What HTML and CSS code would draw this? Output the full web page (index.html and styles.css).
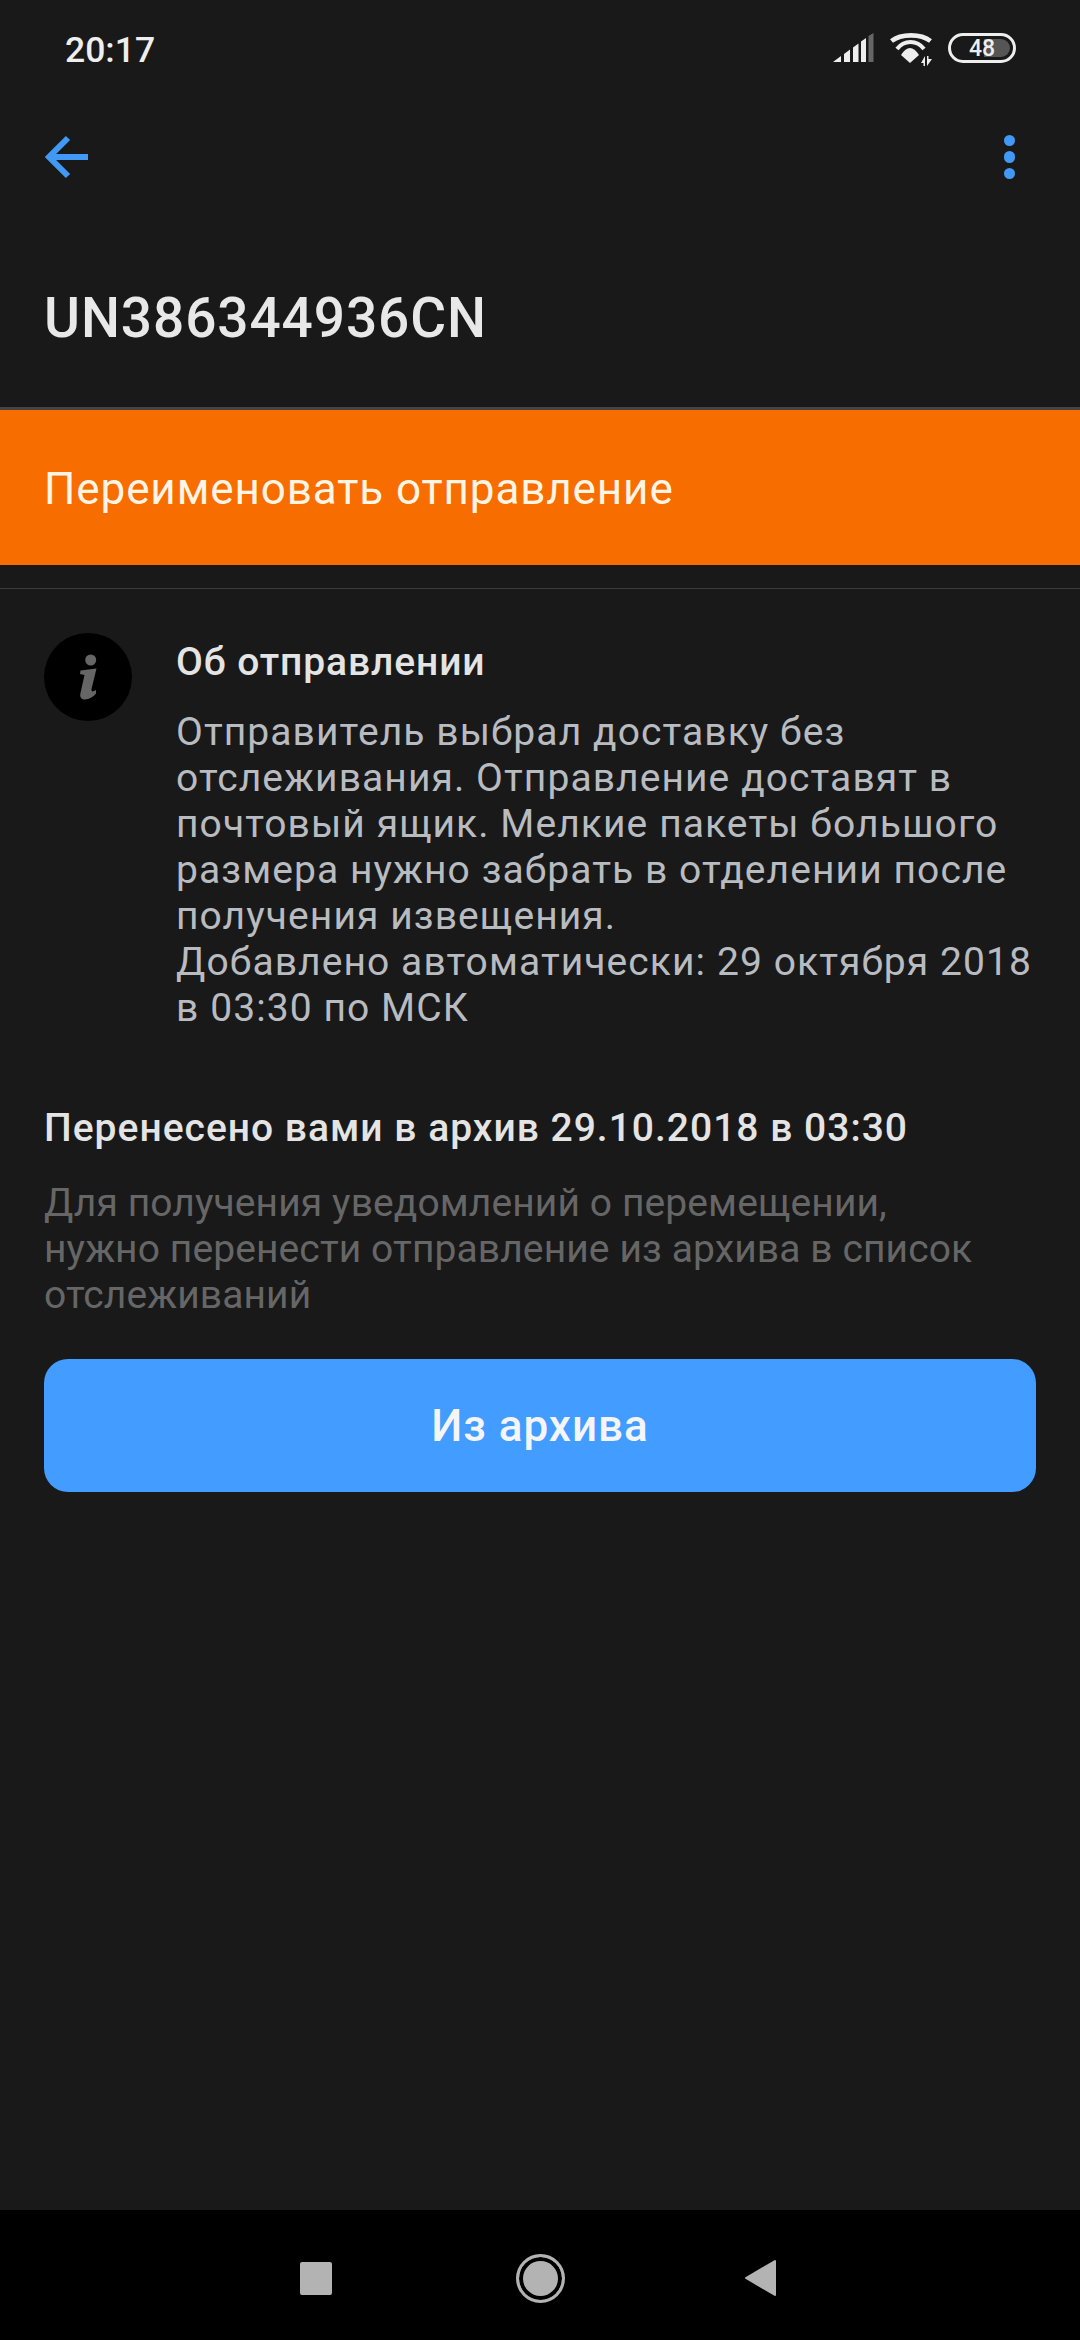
FILE: index.html
```html
<!DOCTYPE html>
<html lang="ru">
<head>
<meta charset="utf-8">
<title>UN386344936CN</title>
<link rel="stylesheet" href="styles.css">
</head>
<body>
<div class="screen">
  <div class="status">
    <span class="time">20:17</span>
    <div class="status-icons">
      <svg class="sig" width="41" height="29" viewBox="0 0 41 29">
        <path fill="#eee" d="M0 29 L8 23 V29 Z M11 21 L17 16.500 V29 H11 Z M20 14.500 L25.500 10.500 V29 H20 Z M28 8.500 L33 5 V29 H28 Z"/>
        <path fill="#666" d="M35.500 3 L40.500 0 V29 H35.500 Z"/>
      </svg>
      <svg class="wifi" width="44" height="34" viewBox="0 0 44 34">
        <g fill="none" stroke="#eee">
          <path stroke-width="4.700" d="M2.500 8 C12 0.500 32 0.500 41.500 8"/>
          <path stroke-width="4" d="M8 16 C15 6.700 28 6.700 35 16"/>
        </g>
        <path fill="#eee" d="M12 22 Q21 8 30 22 L21 30 Z"/>
        <path fill="#eee" d="M36 23 V33 H34.500 V30 H32 Z M38 23 H39.500 V26 H43 L38 33 Z"/>
      </svg>
      <div class="battery">
        <div class="battery-fill"></div>
        <span class="battery-num">48</span>
      </div>
    </div>
  </div>

  <div class="toolbar">
    <svg class="back" width="44" height="44" viewBox="0 0 44 44">
      <path fill="none" stroke="#4299f5" stroke-width="6" d="M44 22 H5 M24 3 L5 22 L24 41"/>
    </svg>
    <div class="dots"><i></i><i></i><i></i></div>
  </div>

  <h1 class="title">UN386344936CN</h1>

  <div class="rename">Переименовать отправление</div>
  <div class="divider"></div>

  <div class="about">
    <div class="info-icon">
      <svg width="32" height="46" viewBox="0 0 32 46">
        <circle cx="18.700" cy="6" r="5.500" fill="#666"/>
        <path fill="#666" d="M8.500 16.500 L24.500 14.500 L19.500 35 C19 38 21 38 24 36 L24 39.500 C21 43 17 45.500 13 45.500 C9 45.500 7.500 43 8.500 39 L12.500 21 L8 20 Z"/>
      </svg>
    </div>
    <div class="about-text">
      <div class="about-title">Об отправлении</div>
      <p class="about-body">Отправитель выбрал доставку без<br>отслеживания. Отправление доставят в<br>почтовый ящик. Мелкие пакеты большого<br>размера нужно забрать в отделении после<br>получения извещения.<br>Добавлено автоматически: 29 октября 2018<br>в 03:30 по МСК</p>
    </div>
  </div>

  <div class="archived">Перенесено вами в архив 29.10.2018 в 03:30</div>
  <p class="hint">Для получения уведомлений о перемещении,<br>нужно перенести отправление из архива в список<br>отслеживаний</p>
  <div class="button">Из архива</div>

  <div class="spacer"></div>

  <div class="nav">
    <div class="nav-square"></div>
    <div class="nav-home"></div>
    <svg class="nav-back" width="32" height="38" viewBox="0 0 32 38">
      <path fill="#b3b3b3" stroke="#b3b3b3" stroke-width="2" stroke-linejoin="round" d="M30 2 V36 L1 19 Z"/>
    </svg>
  </div>
</div>
</body>
</html>
```
FILE: styles.css
```css
* { box-sizing: border-box; }
html, body { margin: 0; padding: 0; }
body {
  width: 1080px;
  height: 2340px;
  background: #191919;
  font-family: Roboto, "Liberation Sans", sans-serif;
  overflow: hidden;
}
.screen {
  display: flex;
  flex-direction: column;
  width: 1080px;
  height: 2340px;
}
.status {
  display: flex;
  justify-content: space-between;
  align-items: center;
  height: 100px;
  padding: 0 64px 0 65px;
  flex: none;
}
.time {
  font-size: 35.500px;
  font-weight: 500;
  color: #eeeeee;
}
.status-icons {
  display: flex;
  align-items: flex-start;
  gap: 15px;
}
.battery {
  position: relative;
  width: 68px;
  height: 30px;
  border: 3px solid #eee;
  border-radius: 15px;
  display: flex;
  align-items: center;
  justify-content: center;
  overflow: hidden;
}
.battery-fill {
  position: absolute;
  top: 3px;
  bottom: 3px;
  right: 3px;
  width: 26px;
  background: #555;
  border-radius: 0 10px 10px 0;
}
.battery-num {
  position: relative;
  font-size: 23px;
  font-weight: 500;
  color: #eee;
}
.toolbar {
  display: flex;
  justify-content: space-between;
  align-items: center;
  height: 114px;
  padding: 0 65px 0 44px;
  flex: none;
}
.dots {
  display: flex;
  flex-direction: column;
  gap: 5px;
}
.dots i {
  display: block;
  width: 11.500px;
  height: 11.500px;
  border-radius: 50%;
  background: #4299f5;
}
.title {
  margin: 0;
  padding: 66px 44px 0;
  height: 196px;
  font-size: 55px;
  line-height: 76px;
  font-weight: 500;
  color: #e8e8e8;
  letter-spacing: 0.900px;
  border-bottom: 3px solid #444;
  flex: none;
}
.rename {
  display: flex;
  align-items: center;
  height: 155px;
  padding: 2px 44px 0;
  background: #f76d00;
  color: #fff5e6;
  font-size: 44px;
  letter-spacing: 0.900px;
  flex: none;
}
.divider {
  height: 1px;
  background: #3c3c3c;
  margin-top: 23px;
  flex: none;
}
.about {
  display: flex;
  padding: 44px 44px 0;
  flex: none;
}
.info-icon {
  width: 88px;
  height: 88px;
  border-radius: 50%;
  background: #000;
  display: flex;
  align-items: center;
  justify-content: center;
  flex: none;
}
.about-text {
  margin-left: 44px;
  padding-top: 6px;
}
.about-title {
  font-size: 39px;
  font-weight: 500;
  color: #e4e4e4;
  line-height: 46px;
  letter-spacing: 0.900px;
}
.about-body {
  margin: 24px 0 0;
  font-size: 39px;
  line-height: 46px;
  color: #b8bcc0;
  letter-spacing: 1.080px;
}
.archived {
  padding: 0 44px;
  margin-top: 74px;
  font-size: 39px;
  line-height: 46px;
  font-weight: 500;
  color: #e4e4e4;
  letter-spacing: 1px;
  flex: none;
}
.hint {
  margin: 29px 0 0;
  padding: 0 44px;
  font-size: 39px;
  line-height: 46px;
  color: #666;
  letter-spacing: 0.100px;
  flex: none;
}
.button {
  display: flex;
  align-items: center;
  justify-content: center;
  margin: 41px 44px 0;
  height: 133px;
  border-radius: 24px;
  background: #439cff;
  color: #f5f5f5;
  font-size: 44px;
  font-weight: 500;
  letter-spacing: 1px;
  flex: none;
}
.spacer { flex: 1; }
.nav {
  height: 130px;
  padding: 6px 0 0 300px;
  background: #000;
  flex: none;
  display: flex;
  align-items: center;
}
.nav-square {
  width: 32px;
  height: 33px;
  background: #b3b3b3;
  border-radius: 2px;
  margin-right: 184px;
}
.nav-home {
  width: 49px;
  height: 49px;
  border-radius: 50%;
  background: #b3b3b3;
  border: 3px solid #b3b3b3;
  box-shadow: inset 0 0 0 4px #000;
  margin-right: 180px;
}
.nav-back { flex: none; }
```
